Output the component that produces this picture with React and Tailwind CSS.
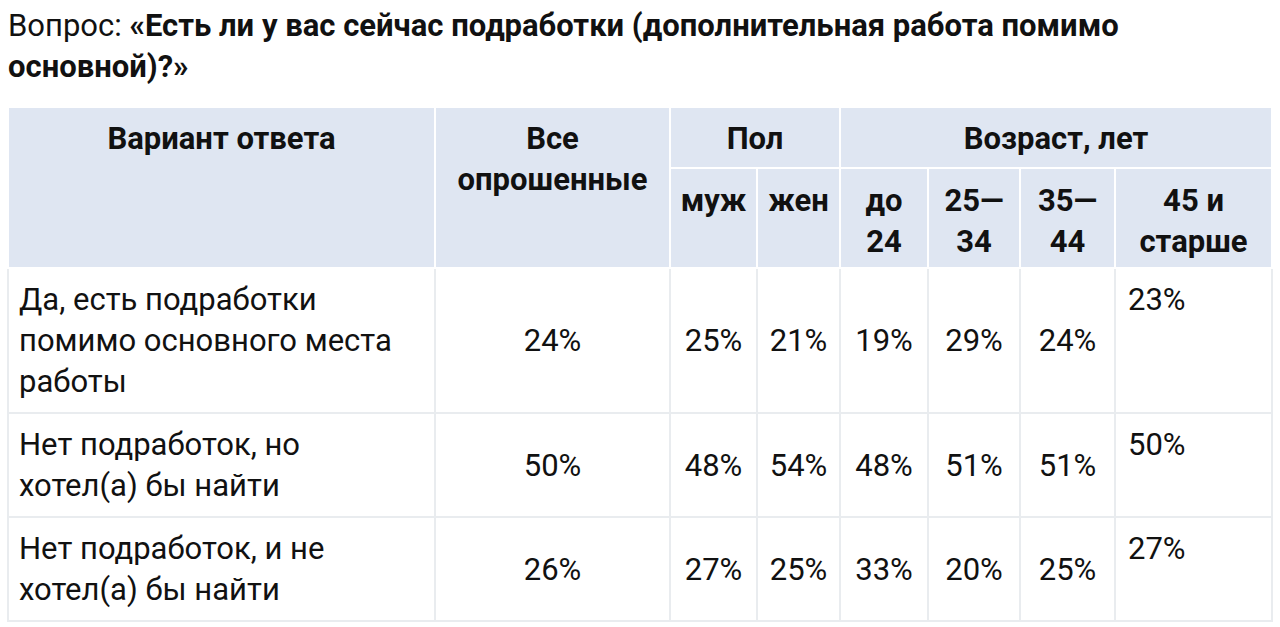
import React from 'react';

const rows = [
  { label: ['Да, есть подработки', 'помимо основного места', 'работы'], all: '24%', vals: ['25%', '21%', '19%', '29%', '24%'], old: '23%' },
  { label: ['Нет подработок, но', 'хотел(а) бы найти'], all: '50%', vals: ['48%', '54%', '48%', '51%', '51%'], old: '50%' },
  { label: ['Нет подработок, и не', 'хотел(а) бы найти'], all: '26%', vals: ['27%', '25%', '33%', '20%', '25%'], old: '27%' },
];

const widths = [427, 235, 87, 83, 88, 92, 95, 157];

export default function App() {
  const th = 'bg-[#dfe6f2] border-2 border-white font-bold text-center align-top';
  const td = 'border-2 border-[#e9ecef] text-center align-middle';
  return (
    <div className="bg-white w-[1280px] h-[627px] overflow-hidden text-[#111] font-['Roboto',sans-serif] text-[31px] leading-[41px]">
      <div className="pl-2 pt-[5px]">
        <div>
          <span>Вопрос: </span>
          <b>«Есть ли у вас сейчас подработки (дополнительная работа помимо</b>
        </div>
        <div><b>основной)?»</b></div>
      </div>
      <table className="mt-[19px] ml-[7px] border-collapse table-fixed w-[1265px]">
        <colgroup>
          {widths.map((w, i) => <col key={i} style={{ width: w }} />)}
        </colgroup>
        <thead>
          <tr className="h-[61px]">
            <th rowSpan={2} className={`${th} pt-[10px]`}>Вариант ответа</th>
            <th rowSpan={2} className={`${th} pt-[10px]`}>Все<br />опрошенные</th>
            <th colSpan={2} className={`${th} pt-[10px]`}>Пол</th>
            <th colSpan={4} className={`${th} pt-[10px]`}>Возраст, лет</th>
          </tr>
          <tr className="h-[100px]">
            <th className={`${th} pt-[11px]`}>муж</th>
            <th className={`${th} pt-[11px]`}>жен</th>
            <th className={`${th} pt-[11px]`}>до<br />24</th>
            <th className={`${th} pt-[11px]`}>25—<br />34</th>
            <th className={`${th} pt-[11px]`}>35—<br />44</th>
            <th className={`${th} pt-[11px]`}>45 и<br />старше</th>
          </tr>
        </thead>
        <tbody>
          {rows.map((r, i) => (
            <tr key={i}>
              <td className="border-2 border-[#e9ecef] text-left pl-[10px] py-[10px] align-middle">
                {r.label.map((l, j) => <div key={j}>{l}</div>)}
              </td>
              <td className={td}>{r.all}</td>
              {r.vals.map((v, j) => <td key={j} className={td}>{v}</td>)}
              <td className="border-2 border-[#e9ecef] text-left align-top pl-[12px] pt-[10px]">{r.old}</td>
            </tr>
          ))}
        </tbody>
      </table>
    </div>
  );
}
